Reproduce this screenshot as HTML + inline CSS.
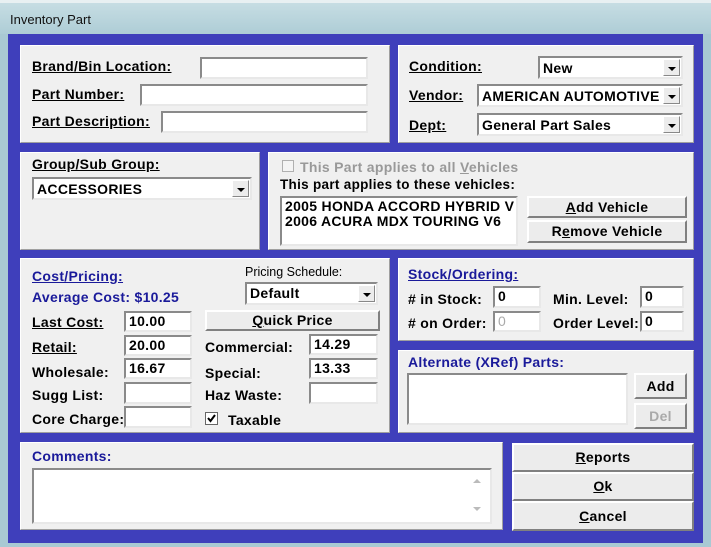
<!DOCTYPE html>
<html><head><meta charset="utf-8"><style>
*{box-sizing:border-box;margin:0;padding:0}
body{width:711px;height:547px;overflow:hidden;background:#a9c9d3;font-family:"Liberation Sans",sans-serif;font-size:14px;letter-spacing:0.3px;font-weight:bold;color:#000;position:relative}
.title{position:absolute;left:0;top:0;width:711px;height:34px;background:linear-gradient(#c6dde3,#aecdd6);border-top:3px solid #e8f0f2}
.title span{position:absolute;left:10px;top:9px;font-weight:normal;font-size:13px;letter-spacing:0;color:#111}
.frame{position:absolute;left:8px;top:34px;width:695px;height:509px;background:#3f3fbb}
.p{position:absolute;background:#f0f0f0;border:1px solid #fff;border-right-color:#a0a0a0;border-bottom-color:#a0a0a0}
.a{position:absolute;white-space:nowrap}
.u{text-decoration:underline}
.blue{color:#1a1a9a}
.in{position:absolute;background:#fff;border:2px solid;border-color:#8a8a8a #e8e8e8 #e8e8e8 #8a8a8a;padding:0 0 0 3px;line-height:17px;white-space:nowrap;overflow:hidden}
.btn{position:absolute;background:#ececec;border:2px solid;border-color:#fff #808080 #808080 #fff;text-align:center;white-space:nowrap}
.dd{position:absolute;right:1px;top:1px;bottom:1px;width:17px;background:#ececec;border:1px solid;border-color:#fff #888 #888 #fff}
.dd svg{position:absolute;left:4px;top:7px}
</style></head><body>
<div class="title"><span>Inventory Part</span></div>
<div class="frame"></div>

<div class="p" style="left:20px;top:45px;width:370px;height:98px"></div>
<div class="a u" style="left:32px;top:58px">Brand/Bin Location:</div>
<div class="in" style="left:200px;top:57px;width:168px;height:22px"></div>
<div class="a u" style="left:32px;top:86px">Part Number:</div>
<div class="in" style="left:140px;top:84px;width:228px;height:22px"></div>
<div class="a u" style="left:32px;top:113px">Part Description:</div>
<div class="in" style="left:161px;top:111px;width:207px;height:22px"></div>

<div class="p" style="left:398px;top:45px;width:296px;height:98px"></div>
<div class="a u" style="left:409px;top:58px">Condition:</div>
<div class="in" style="left:538px;top:56px;width:145px;height:23px;padding-top:2px">New<div class="dd"><svg width="8" height="5"><path d="M0 0H8L4 4Z"/></svg></div></div>
<div class="a u" style="left:409px;top:87px">Vendor:</div>
<div class="in" style="left:477px;top:84px;width:206px;height:23px;padding-top:2px">AMERICAN AUTOMOTIVE<div class="dd"><svg width="8" height="5"><path d="M0 0H8L4 4Z"/></svg></div></div>
<div class="a u" style="left:409px;top:117px">Dept:</div>
<div class="in" style="left:477px;top:113px;width:206px;height:23px;padding-top:2px">General Part Sales<div class="dd"><svg width="8" height="5"><path d="M0 0H8L4 4Z"/></svg></div></div>

<div class="p" style="left:20px;top:152px;width:240px;height:98px"></div>
<div class="a u" style="left:32px;top:156px">Group/Sub Group:</div>
<div class="in" style="left:32px;top:177px;width:220px;height:23px;padding-top:2px">ACCESSORIES<div class="dd"><svg width="8" height="5"><path d="M0 0H8L4 4Z"/></svg></div></div>

<div class="p" style="left:268px;top:152px;width:426px;height:98px"></div>
<div class="a" style="left:282px;top:160px;width:12px;height:12px;border:1px solid #b0b0b0;background:#f4f4f4"></div>
<div class="a" style="left:300px;top:159px;color:#999">This Part applies to all <span class="u">V</span>ehicles</div>
<div class="a" style="left:280px;top:177px;font-size:13.5px">This part applies to these vehicles:</div>
<div class="in" style="left:280px;top:196px;width:238px;height:50px;line-height:15px;padding-top:1px">2005 HONDA ACCORD HYBRID V<br>2006 ACURA MDX TOURING V6</div>
<div class="btn" style="left:527px;top:196px;width:160px;height:22px;line-height:18px"><span class="u">A</span>dd Vehicle</div>
<div class="btn" style="left:527px;top:220px;width:160px;height:23px;line-height:19px">R<span class="u">e</span>move Vehicle</div>

<div class="p" style="left:20px;top:258px;width:370px;height:175px"></div>
<div class="a u blue" style="left:32px;top:268px">Cost/Pricing:</div>
<div class="a blue" style="left:32px;top:289px">Average Cost: $10.25</div>
<div class="a" style="left:245px;top:265px;font-weight:normal;font-size:12.5px;letter-spacing:0">Pricing Schedule:</div>
<div class="in" style="left:245px;top:282px;width:133px;height:23px;padding-top:1px">Default<div class="dd"><svg width="8" height="5"><path d="M0 0H8L4 4Z"/></svg></div></div>
<div class="a u" style="left:32px;top:314px">Last Cost:</div>
<div class="in" style="left:124px;top:311px;width:68px;height:21px">10.00</div>
<div class="btn" style="left:205px;top:310px;width:175px;height:21px;line-height:17px"><span class="u">Q</span>uick Price</div>
<div class="a u" style="left:32px;top:339px">Retail:</div>
<div class="in" style="left:124px;top:335px;width:68px;height:21px">20.00</div>
<div class="a" style="left:205px;top:339px">Commercial:</div>
<div class="in" style="left:309px;top:334px;width:69px;height:21px">14.29</div>
<div class="a" style="left:32px;top:364px">Wholesale:</div>
<div class="in" style="left:124px;top:358px;width:68px;height:21px">16.67</div>
<div class="a" style="left:205px;top:365px">Special:</div>
<div class="in" style="left:309px;top:358px;width:69px;height:21px">13.33</div>
<div class="a" style="left:32px;top:387px">Sugg List:</div>
<div class="in" style="left:124px;top:382px;width:68px;height:22px"></div>
<div class="a" style="left:205px;top:387px">Haz Waste:</div>
<div class="in" style="left:309px;top:382px;width:69px;height:22px"></div>
<div class="a" style="left:32px;top:411px">Core Charge:</div>
<div class="in" style="left:124px;top:406px;width:68px;height:22px"></div>
<div class="a" style="left:205px;top:412px;width:13px;height:13px;border:1px solid #666;background:#fff"><svg width="11" height="11" style="position:absolute;left:0;top:0"><path d="M2 5L4.5 8L9 2" stroke="#000" stroke-width="2" fill="none"/></svg></div>
<div class="a" style="left:228px;top:412px">Taxable</div>

<div class="p" style="left:398px;top:258px;width:296px;height:83px"></div>
<div class="a u blue" style="left:408px;top:266px">Stock/Ordering:</div>
<div class="a" style="left:408px;top:291px"># in Stock:</div>
<div class="in" style="left:493px;top:286px;width:48px;height:22px">0</div>
<div class="a" style="left:553px;top:291px">Min. Level:</div>
<div class="in" style="left:640px;top:286px;width:44px;height:22px">0</div>
<div class="a" style="left:408px;top:315px"># on Order:</div>
<div class="in" style="left:493px;top:311px;width:48px;height:21px;color:#aaa;font-weight:normal">0</div>
<div class="a" style="left:553px;top:315px">Order Level:</div>
<div class="in" style="left:640px;top:311px;width:44px;height:21px">0</div>

<div class="p" style="left:398px;top:350px;width:296px;height:83px"></div>
<div class="a blue" style="left:408px;top:354px">Alternate (XRef) Parts:</div>
<div class="in" style="left:407px;top:373px;width:221px;height:52px"></div>
<div class="btn" style="left:634px;top:373px;width:53px;height:26px;line-height:22px">Add</div>
<div class="btn" style="left:634px;top:403px;width:53px;height:26px;line-height:22px;color:#aaa">Del</div>

<div class="p" style="left:20px;top:442px;width:483px;height:88px"></div>
<div class="a blue" style="left:32px;top:448px">Comments:</div>
<div class="in" style="left:32px;top:468px;width:460px;height:56px"></div>
<svg class="a" style="left:473px;top:479px" width="8" height="5"><path d="M0 4H8L4 0Z" fill="#bbb"/></svg>
<svg class="a" style="left:473px;top:507px" width="8" height="5"><path d="M0 0H8L4 4Z" fill="#bbb"/></svg>

<div class="btn" style="left:512px;top:443px;width:182px;height:29px;line-height:25px"><span class="u">R</span>eports</div>
<div class="btn" style="left:512px;top:472px;width:182px;height:29px;line-height:25px"><span class="u">O</span>k</div>
<div class="btn" style="left:512px;top:501px;width:182px;height:30px;line-height:26px"><span class="u">C</span>ancel</div>
</body></html>
